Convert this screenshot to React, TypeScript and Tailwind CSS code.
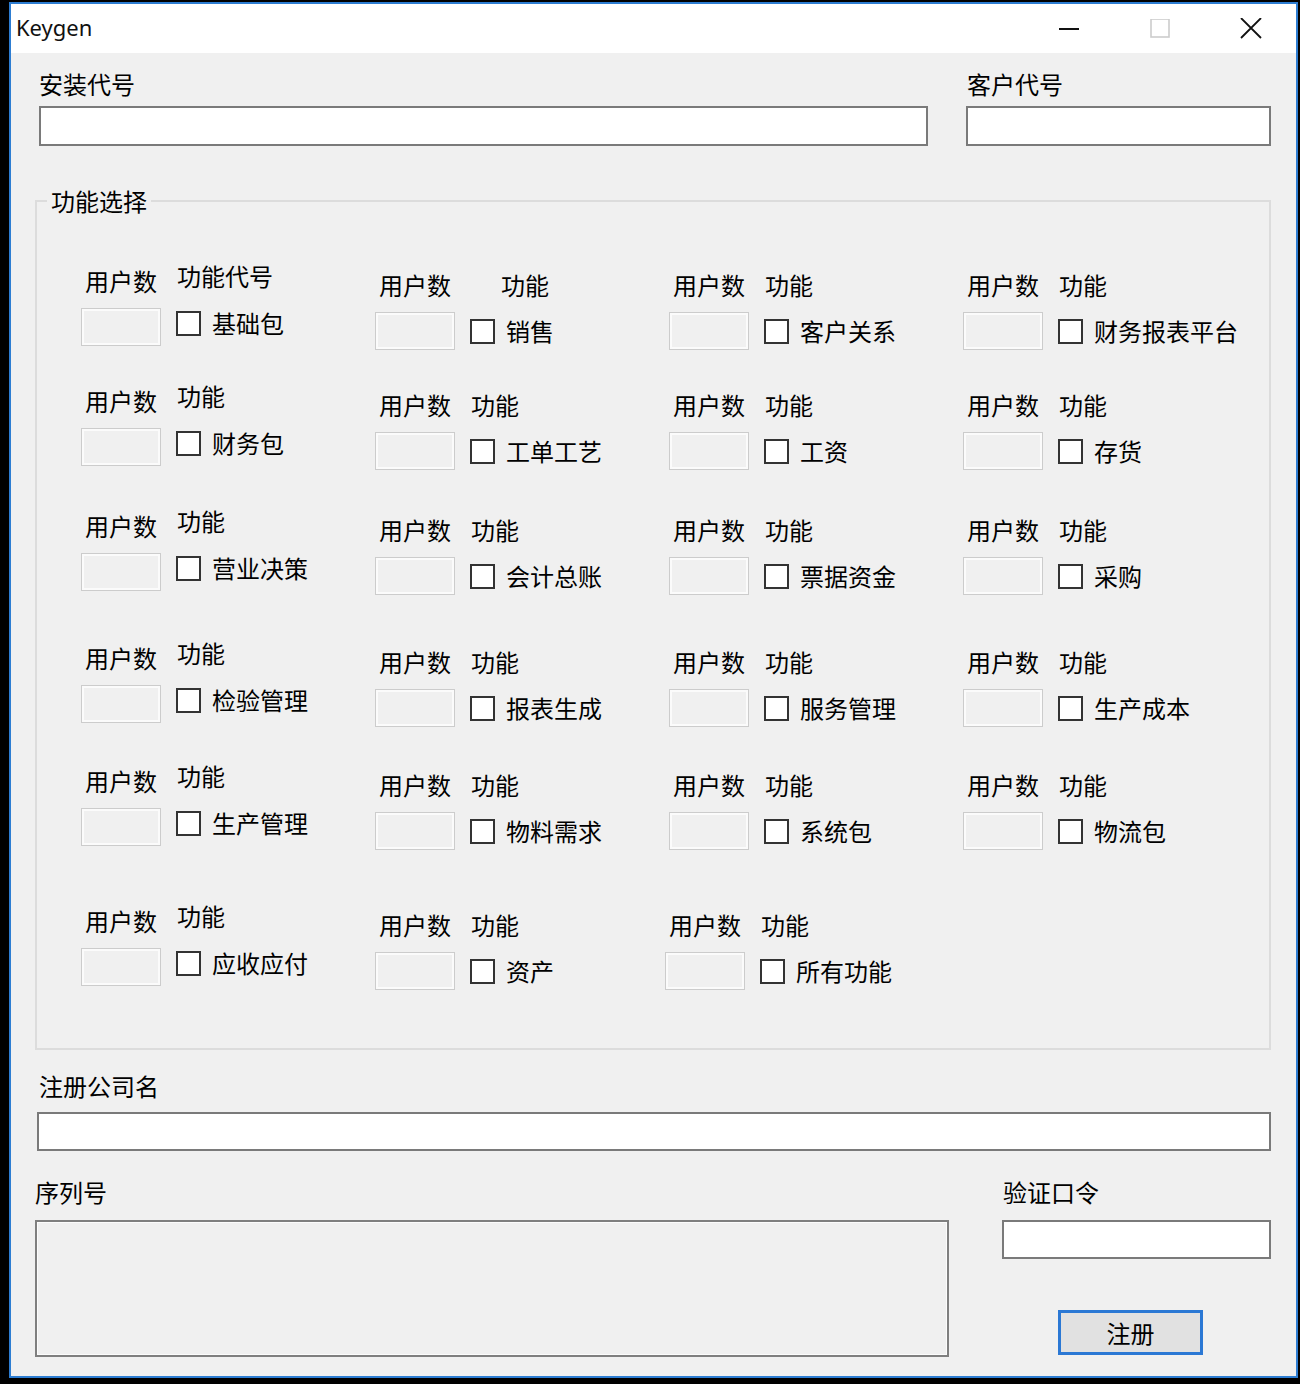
import React from 'react';

const rows: string[][] = [
  ['基础包', '销售', '客户关系', '财务报表平台'],
  ['财务包', '工单工艺', '工资', '存货'],
  ['营业决策', '会计总账', '票据资金', '采购'],
  ['检验管理', '报表生成', '服务管理', '生产成本'],
  ['生产管理', '物料需求', '系统包', '物流包'],
  ['应收应付', '资产', '所有功能'],
];

interface FeatureProps {
  name: string;
  head: string;
  first: boolean;
  headPad: string;
  shift: string;
}

const Feature: React.FC<FeatureProps> = ({ name, head, first, headPad, shift }) => (
  <div className={`flex flex-col ${first ? '-mt-[4px]' : ''} ${shift}`}>
    <div className="flex h-[28px] items-center">
      <span className="w-[96px] pl-[4px]">用户数</span>
      <span className={`${headPad} ${first ? '-translate-y-[5px]' : ''}`}>{head}</span>
    </div>
    <div className="mt-[13px] flex items-center">
      <div className="h-[38px] w-[80px] border border-[#cccccc] bg-[#f0f0f0] shadow-[inset_0_0_0_2px_#fbfbfb]" />
      <div className={`ml-[15px] flex items-center ${first ? '-translate-y-[4px]' : ''}`}>
        <div className="h-[25px] w-[25px] border-2 border-[#333333] bg-white" />
        <span className="ml-[11px]">{name}</span>
      </div>
    </div>
  </div>
);

export default function App() {
  return (
    <div className="h-[1384px] w-[1300px] bg-black pl-[9px] pt-[2px] text-[24px] leading-[28px] text-black" style={{ fontFamily: '"Noto Sans CJK SC", "Noto Sans", sans-serif' }}>
      <div className="flex h-[1376px] w-[1289px] flex-col border-2 border-[#2d7dd2] bg-[#f0f0f0]">
        {/* title bar */}
        <div className="flex h-[49px] shrink-0 items-center bg-white">
          <span className="-mt-[3px] pl-[5px] text-[22px] text-[#111]" style={{ fontFamily: '"Noto Sans", sans-serif' }}>Keygen</span>
          <div className="ml-auto flex h-full">
            <div className="flex w-[91px] items-center justify-center">
              <svg width="20" height="20" viewBox="0 0 20 20"><line x1="0" y1="10" x2="20" y2="10" stroke="#111" strokeWidth="2" /></svg>
            </div>
            <div className="flex w-[91px] items-center justify-center">
              <svg width="20" height="20" viewBox="0 0 20 20"><rect x="1" y="0" width="18" height="18" fill="none" stroke="#cccccc" strokeWidth="1.6" /></svg>
            </div>
            <div className="flex w-[91px] items-center justify-center">
              <svg width="22" height="22" viewBox="0 0 22 22"><path d="M1 0 L21 20 M21 0 L1 20" stroke="#111" strokeWidth="1.8" /></svg>
            </div>
          </div>
        </div>

        {/* form body */}
        <div className="flex flex-col pr-[25px]">
          <div className="mt-[17px] flex">
            <div className="ml-[28px] flex w-[889px] flex-col">
              <span>安装代号</span>
              <div className="mt-[8px] h-[40px] border-2 border-[#7a7a7a] bg-white" />
            </div>
            <div className="ml-[38px] flex w-[305px] flex-col">
              <span className="pl-[1px]">客户代号</span>
              <div className="mt-[8px] h-[40px] border-2 border-[#7a7a7a] bg-white" />
            </div>
          </div>

          <fieldset className="ml-[24px] mt-[41px] w-[1236px] border-2 border-[#dcdcdc] pb-[58px] pt-[56px]">
            <legend className="ml-[10px] px-[4px]">功能选择</legend>
            <div className="ml-[44px] grid grid-cols-[294px_294px_294px_294px] grid-rows-[120px_125px_132px_123px_140px_79px]">
              {rows.map((row, r) =>
                row.map((name, c) => (
                  <Feature
                    key={`${r}-${c}`}
                    name={name}
                    head={r === 0 && c === 0 ? '功能代号' : '功能'}
                    first={c === 0}
                    headPad={r === 0 && c === 1 ? 'pl-[30px]' : ''}
                    shift={r === 5 && c === 2 ? '-ml-[4px]' : ''}
                  />
                ))
              )}
            </div>
          </fieldset>

          <div className="ml-[28px] mt-[22px]">注册公司名</div>
          <div className="ml-[26px] mt-[12px] h-[39px] w-[1234px] border-2 border-[#7a7a7a] bg-white" />

          <div className="mt-[27px] flex">
            <div className="ml-[24px] flex w-[914px] flex-col">
              <span>序列号</span>
              <div className="mt-[14px] h-[137px] border-2 border-[#7f7f7f] bg-[#f0f0f0] shadow-[inset_0_0_0_1px_#fcfcfc]" />
            </div>
            <div className="ml-[53px] flex w-[269px] flex-col">
              <span className="pl-[1px]">验证口令</span>
              <div className="mt-[14px] h-[39px] border-2 border-[#7a7a7a] bg-white" />
              <button className="ml-[56px] mt-[51px] h-[45px] w-[145px] border-[3px] border-[#2b78d4] bg-[#e1e1e1] text-[24px] leading-[28px]">
                注册
              </button>
            </div>
          </div>
        </div>
      </div>
    </div>
  );
}
